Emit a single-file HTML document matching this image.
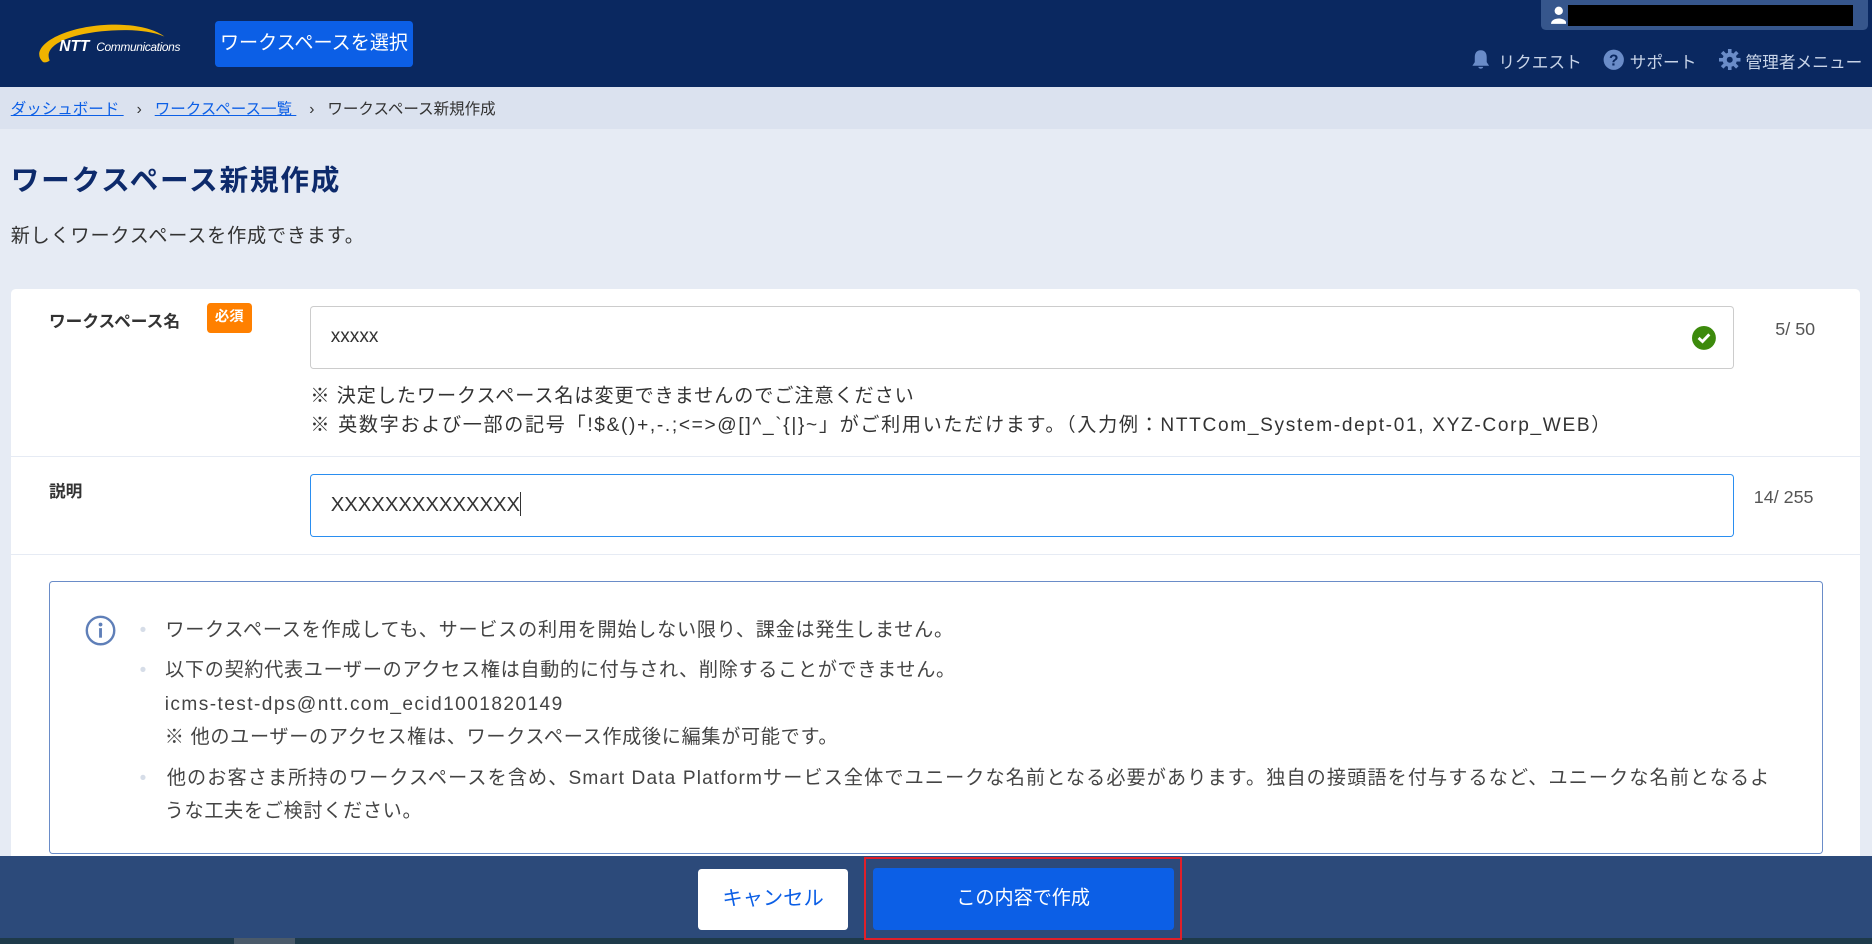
<!DOCTYPE html>
<html><head><meta charset="utf-8"><style>
html,body{margin:0;padding:0;overflow:hidden}
body{width:1872px;height:944px;background:#e6ebf4;font-family:"Liberation Sans","Noto Sans CJK JP",sans-serif;}
#w{zoom:1.19388;position:relative;width:1568px;height:791px;overflow:hidden;background:#e6ebf4}
.a{position:absolute;white-space:nowrap}
</style></head><body><div id="w">
<div class="a" style="left:0;top:0;width:1568px;height:73px;background:#0a2860"></div>
<svg class="a" style="left:28px;top:18px" width="140" height="40" viewBox="0 0 140 40">
<path d="M8 34 C-4 22 24 4 66 3 C88 3 102 7 110 13 C98 8 82 7 66 8 C32 10 8 20 14 33 C12 35 9 35 8 34Z" fill="#f0b400"/>
<text x="22" y="25" font-family="Liberation Sans" font-weight="bold" font-style="italic" font-size="13" fill="#fff">NTT</text>
<text x="53" y="25" font-family="Liberation Sans" font-style="italic" font-size="10" fill="#fff" letter-spacing="-0.3">Communications</text>
</svg>
<div class="a" style="left:180px;top:18px;width:166px;height:38px;background:#0c5fe6;border-radius:3px;color:#fff;font-size:16px;line-height:38px;text-align:center">ワークスペースを選択</div>
<div class="a" style="left:1291px;top:0;width:274px;height:25px;background:#36568c;border-radius:0 0 4px 4px"></div>
<svg class="a" style="left:1299px;top:5px" width="13" height="15" viewBox="0 0 13 15"><circle cx="6.5" cy="4" r="3.5" fill="#fff"/><path d="M0 15 C0 9 13 9 13 15Z" fill="#fff"/></svg>
<div class="a" style="left:1313px;top:4px;width:239px;height:18px;background:#000"></div>
<svg class="a" style="left:1231px;top:41px" width="18" height="18" viewBox="0 0 18 18"><path d="M9 1 C5 1 4 4 4 7 L4 11 L2 14 L16 14 L14 11 L14 7 C14 4 13 1 9 1Z M7 15 L11 15 C11 17 7 17 7 15Z" fill="#6a8cc8"/></svg>
<div class="a" style="left:1255px;top:41px;color:#c8d4e8;font-size:14px">リクエスト</div>
<svg class="a" style="left:1343px;top:41px" width="18" height="18"><circle cx="9" cy="9" r="8.5" fill="#6a8cc8"/><text x="9" y="14" text-anchor="middle" font-size="13" font-weight="bold" fill="#0a2860" font-family="Liberation Sans">?</text></svg>
<div class="a" style="left:1365px;top:41px;color:#c8d4e8;font-size:14px">サポート</div>
<svg class="a" style="left:1440px;top:41px" width="18" height="18" viewBox="0 0 18 18"><g fill="#6a8cc8"><circle cx="9" cy="9" r="6"/><rect x="7.5" y="0" width="3" height="18"/><rect x="0" y="7.5" width="18" height="3"/><rect x="7.5" y="0" width="3" height="18" transform="rotate(45 9 9)"/><rect x="7.5" y="0" width="3" height="18" transform="rotate(-45 9 9)"/></g><circle cx="9" cy="9" r="2.5" fill="#0a2860"/></svg>
<div class="a" style="left:1462px;top:41px;color:#c8d4e8;font-size:14px">管理者メニュー</div>
<div class="a" style="left:0;top:73px;width:1568px;height:35px;background:#dbe2ef"></div>
<div class="a" style="left:9px;top:81px;font-size:13px;color:#333"><span style="color:#0c5fe6;text-decoration:underline">ダッシュボード </span>&nbsp;&nbsp; › &nbsp;&nbsp;<span style="color:#0c5fe6;text-decoration:underline">ワークスペース一覧 </span>&nbsp;&nbsp; › &nbsp;&nbsp;ワークスペース新規作成</div>
<div class="a" style="left:9px;top:132px;font-size:24px;font-weight:bold;color:#0d2a6b;letter-spacing:1.5px">ワークスペース新規作成</div>
<div class="a" style="left:9px;top:184px;font-size:16px;color:#333;letter-spacing:0.7px">新しくワークスペースを作成できます。</div>
<div class="a" style="left:9px;top:242px;width:1549px;height:520px;background:#fff;border-radius:4px"></div>
<div class="a" style="left:41px;top:258px;font-size:14px;font-weight:bold;color:#333">ワークスペース名</div>
<div class="a" style="left:173px;top:254px;width:38px;height:25px;background:#ff8000;border-radius:3px;color:#fff;font-size:12px;font-weight:bold;line-height:25px;text-align:center">必須</div>
<div class="a" style="left:260px;top:256px;width:1191px;height:51px;border:1px solid #ccc;border-radius:3px"></div>
<div class="a" style="left:277px;top:273px;font-size:16px;color:#333">xxxxx</div>
<svg class="a" style="left:1417px;top:273px" width="20" height="20"><circle cx="10" cy="10" r="10" fill="#3c8a0c"/><path d="M5.5 10 L8.8 13 L14.5 7" stroke="#fff" stroke-width="2.4" fill="none"/></svg>
<div class="a" style="left:1487px;top:267px;font-size:15px;color:#555">5/ 50</div>
<div class="a" style="left:260px;top:321px;font-size:16px;color:#333;line-height:24px"><div style="letter-spacing:0.8px">※ 決定したワークスペース名は変更できませんのでご注意ください</div><div style="letter-spacing:1.4px">※ 英数字および一部の記号「!$&amp;()+,-.;&lt;=&gt;@[]^_`{|}~」がご利用いただけます。（入力例：NTTCom_System-dept-01, XYZ-Corp_WEB）</div></div>
<div class="a" style="left:9px;top:382px;width:1549px;height:1px;background:#e6ebf4"></div>
<div class="a" style="left:41px;top:400px;font-size:14px;font-weight:bold;color:#333">説明</div>
<div class="a" style="left:260px;top:397px;width:1191px;height:51px;border:1px solid #2a8ef0;border-radius:3px"></div>
<div class="a" style="left:277px;top:412px;font-size:17px;color:#333">XXXXXXXXXXXXXX<span style="display:inline-block;width:1px;height:20px;background:#333;vertical-align:-4px"></span></div>
<div class="a" style="left:1469px;top:408px;font-size:15px;color:#555">14/ 255</div>
<div class="a" style="left:9px;top:464px;width:1549px;height:1px;background:#e6ebf4"></div>
<div class="a" style="left:41px;top:487px;width:1484px;height:227px;border:1px solid #6a8cc8;border-radius:3px"></div>
<svg class="a" style="left:71px;top:515px" width="26" height="26"><circle cx="13" cy="13" r="11.5" stroke="#5f7fb8" stroke-width="2" fill="none"/><circle cx="13" cy="8" r="1.6" fill="#5f7fb8"/><rect x="11.8" y="11" width="2.4" height="8" fill="#5f7fb8"/></svg>
<div class="a" style="left:117px;top:514px;font-size:16px;color:#444;line-height:28px">
<div style="letter-spacing:0.65px"><span style="color:#d6dde8">•</span>&nbsp;&nbsp;&nbsp;ワークスペースを作成しても、サービスの利用を開始しない限り、課金は発生しません。</div>
<div style="margin-top:6px;letter-spacing:0.6px"><span style="color:#d6dde8">•</span>&nbsp;&nbsp;&nbsp;以下の契約代表ユーザーのアクセス権は自動的に付与され、削除することができません。</div>
<div style="padding-left:21px;letter-spacing:1.2px">icms-test-dps@ntt.com_ecid1001820149</div>
<div style="padding-left:21px;letter-spacing:0.6px">※ 他のユーザーのアクセス権は、ワークスペース作成後に編集が可能です。</div>
<div style="margin-top:6px;letter-spacing:0.95px"><span style="color:#d6dde8">•</span>&nbsp;&nbsp;&nbsp;他のお客さま所持のワークスペースを含め、Smart Data Platformサービス全体でユニークな名前となる必要があります。独自の接頭語を付与するなど、ユニークな名前となるよ</div>
<div style="padding-left:21px;letter-spacing:0.6px">うな工夫をご検討ください。</div>
</div>
<div class="a" style="left:0;top:717px;width:1568px;height:74px;background:#2c4a7a"></div>
<div class="a" style="left:0;top:786px;width:1568px;height:5px;background:#1e3a4a"></div>
<div class="a" style="left:196px;top:786px;width:51px;height:5px;background:#4a5a6a"></div>
<div class="a" style="left:585px;top:728px;width:125px;height:51px;background:#fff;border-radius:3px;color:#0c5fe6;font-size:17px;line-height:51px;text-align:center">キャンセル</div>
<div class="a" style="left:724px;top:718px;width:263px;height:66px;border:2px solid #e0202a"></div>
<div class="a" style="left:731px;top:727px;width:252px;height:52px;background:#0c5fe6;border-radius:3px;color:#fff;font-size:16px;line-height:52px;text-align:center">この内容で作成</div>
</div></body></html>
